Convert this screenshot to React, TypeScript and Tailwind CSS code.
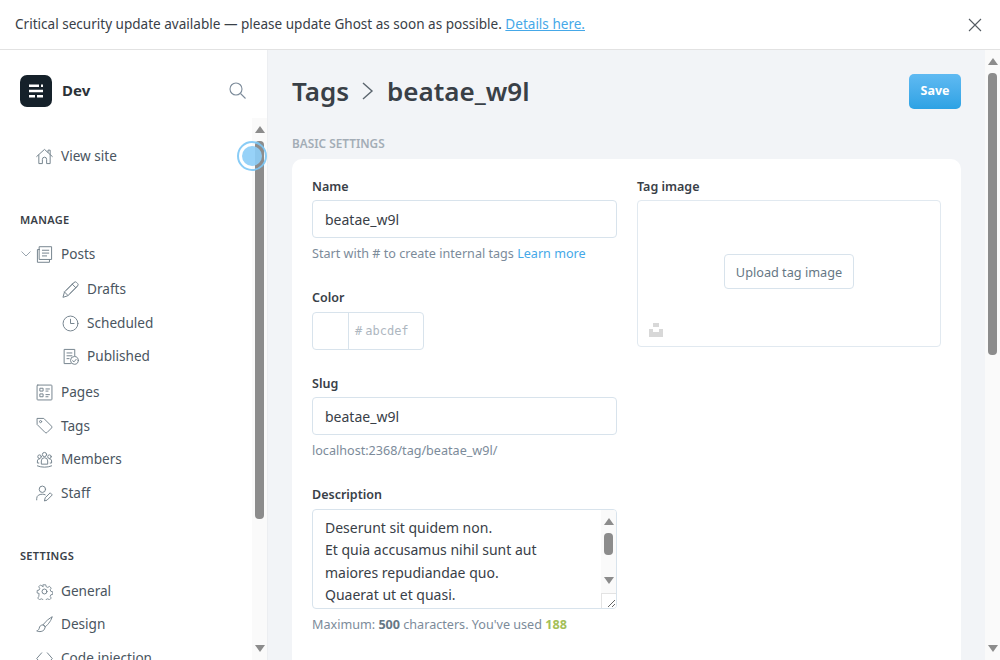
import React from "react";

const Ico = ({ children, size = 17 }: { children: React.ReactNode; size?: number }) => (
  <svg width={size} height={size} viewBox="0 0 24 24" fill="none" stroke="#76858f" strokeWidth={1.4} strokeLinecap="round" strokeLinejoin="round" className="shrink-0">
    {children}
  </svg>
);

const icons: Record<string, React.ReactNode> = {
  home: (<><path d="M1 12 12 2l11 10" /><path d="M4 10v12h5v-6a3 3 0 0 1 6 0v6h5V10" /><path d="M17 6V3h3v6" /></>),
  posts: (<><path d="M5 1h17v18H5z" /><path d="M5 5H2v18h17v-4" /><path d="M9 6h9M9 10h9M9 14h6" /></>),
  drafts: (<><path d="M1.500 22.500l2-7L17 2a2.500 2.500 0 0 1 3.500 0l1.500 1.500a2.500 2.500 0 0 1 0 3.500L8.500 20.500z" /><path d="M3.500 15.500l5 5M14.500 4.500l5 5M6 13 16.500 2.500M11 18 21.500 7.500" /></>),
  clock: (<><circle cx="12" cy="12" r="10.500" /><path d="M12 6v6h5" /></>),
  published: (<><path d="M12 22H3V2h15v9" /><path d="M7 7h7M7 11h7M7 15h3" /><circle cx="17.500" cy="17.500" r="5.500" /><path d="m15 18 2 1.500 3-3.500" /></>),
  pages: (<><rect x="1.500" y="1.500" width="21" height="21" rx="1" /><path d="M6 6h4v4H6zM6 14h4v4H6zM14 7h5M14 10h3M14 15h5M14 18h3" /></>),
  tags: (<><path d="M2 2h9l11 11a2 2 0 0 1 0 2.500L15.500 22a2 2 0 0 1-2.500 0L2 11z" /><circle cx="6.500" cy="6.500" r="1.500" /></>),
  members: (<><circle cx="12" cy="5" r="3" /><circle cx="5" cy="8" r="2.500" /><circle cx="19" cy="8" r="2.500" /><path d="M7.500 18v-4a4.500 4.500 0 0 1 9 0v4zM4 17H2v-3c0-2 1.500-3 3-3M20 17h2v-3c0-2-1.500-3-3-3M2 21c6 2.500 14 2.500 20 0" /></>),
  staff: (<><circle cx="9" cy="6" r="4.500" /><path d="M1 21v-2c0-4 3.500-6 8-6 1.500 0 3 .2 4 .8" /><path d="m12 22 1-4 7-7 3 3-7 7z" /></>),
  general: (<><circle cx="12" cy="12" r="3.500" /><path d="M10 1.500h4l.6 3 2.600 1.100 2.600-1.700 2.800 2.800-1.700 2.600 1.100 2.600 3 .6v4l-3 .6-1.100 2.600 1.700 2.600-2.800 2.800-2.600-1.700-2.600 1.100-.6 3h-4l-.6-3-2.600-1.100-2.600 1.700-2.800-2.800 1.700-2.600L3.500 15l-3-.6v-4l3-.6 1.100-2.600-1.700-2.600 2.800-2.800 2.600 1.700L9.400 4.500z" transform="translate(1.200 1.200) scale(.9)" /></>),
  design: (<><path d="M22.500 1.500c-3 1-9 6-12.500 11l3 3c4.500-4 9.500-10.500 9.500-14z" /><path d="M10 12.500c-3.500 0-5 2-5.500 5-.2 1.500-1.500 3-3.500 3.500 3.500 2 9.500 1 11-2.500.6-1.500.5-2.500 1-3z" /></>),
  code: (<path d="M8 4 1 12l7 8M16 4l7 8-7 8" />),
};

const NavItem = ({ icon, label, sub, h = "h-[34px]" }: { icon: string; label: string; sub?: boolean; h?: string }) => (
  <div className={`flex items-center gap-[8px] ${h} ${sub ? "pl-[62px]" : "pl-[36px]"}`}>
    <Ico>{icons[icon]}</Ico>
    <span className="text-[13.600px] text-[#4a5560] leading-none">{label}</span>
  </div>
);

const SectionTitle = ({ children }: { children: React.ReactNode }) => (
  <div className="pl-[20px] text-[11px] leading-none font-semibold tracking-[0.3px] text-[#394047] uppercase">{children}</div>
);

const ArrowUp = () => <div className="w-0 h-0 border-x-[5px] border-x-transparent border-b-[7px] border-b-[#8c8c8c]" />;
const ArrowDown = () => <div className="w-0 h-0 border-x-[5px] border-x-transparent border-t-[7px] border-t-[#8c8c8c]" />;

const Label = ({ children }: { children: React.ReactNode }) => (
  <div className="text-[12.500px] leading-none font-semibold text-[#394047] h-[14px] pt-[2px] flex items-center">{children}</div>
);

const TextBox = ({ value }: { value: string }) => (
  <div className="h-[38px] w-[305px] rounded-[4px] border border-[#d8e3ec] bg-white flex items-center pl-[12px] text-[14px] text-[#394047]">{value}</div>
);

export default function App() {
  return (
    <div className="w-[1000px] h-[660px] overflow-hidden flex flex-col bg-white font-['Noto_Sans',sans-serif]">
      <div className="h-[50px] shrink-0 border-b border-[#e2e2e2] bg-white flex items-center justify-between pl-[15px] pr-[18px]">
        <div className="text-[13.550px] text-[#394047]">
          Critical security update available — please update Ghost as soon as possible.{" "}
          <span className="text-[#45a8e8] underline">Details here.</span>
        </div>
        <svg width="14" height="14" viewBox="0 0 14 14" stroke="#555c63" strokeWidth="1.100"><path d="M1 1l12 12M13 1 1 13" /></svg>
      </div>

      <div className="flex-1 flex min-h-0">
        <aside className="w-[268px] shrink-0 border-r border-[#eceef1] bg-white flex flex-col min-h-0">
          <div className="h-[68px] shrink-0 pt-[25px] pl-[20px] pr-[21px] flex items-start justify-between">
            <div className="flex items-center gap-[10px]">
              <div className="w-[32px] h-[32px] rounded-[7px] bg-[#15212a] flex items-center justify-center">
                <svg width="14" height="14" viewBox="0 0 14 14" fill="#fff"><path d="M0 .5h10v2.500H0zM12 .5h2v2.500h-2zM0 5.800h14v2.400H0zM0 11h6v2.400H0zM8 11h6v2.400H8z" /></svg>
              </div>
              <span className="text-[15px] font-bold text-[#2b3238] mb-[2px]">Dev</span>
            </div>
            <svg width="17" height="17" viewBox="0 0 17 17" fill="none" stroke="#7c8b9a" strokeWidth="1.100" className="mt-[7px]"><circle cx="7" cy="7" r="6" /><path d="m11.500 11.500 5 5" /></svg>
          </div>
          <div className="flex-1 min-h-0 flex relative">
            <nav className="flex-1 min-w-0 overflow-hidden">
              <div className="mt-[21px]">
                <NavItem icon="home" label="View site" />
              </div>
              <div className="mt-[41px]"><SectionTitle>Manage</SectionTitle></div>
              <div className="mt-[11px] relative">
                <NavItem icon="posts" label="Posts" h="h-[36px]" />
                <svg width="10" height="6" viewBox="0 0 10 6" fill="none" stroke="#9aa5af" className="absolute left-[21px] top-[15px]"><path d="m.5.5 4.500 4.500L9.500.5" /></svg>
              </div>
              <NavItem icon="drafts" label="Drafts" sub />
              <NavItem icon="clock" label="Scheduled" sub />
              <NavItem icon="published" label="Published" sub h="h-[32px]" />
              <div className="mt-[3px]"><NavItem icon="pages" label="Pages" /></div>
              <NavItem icon="tags" label="Tags" h="h-[33px]" />
              <NavItem icon="members" label="Members" />
              <NavItem icon="staff" label="Staff" />
              <div className="mt-[40px]"><SectionTitle>Settings</SectionTitle></div>
              <div className="mt-[13px]">
                <NavItem icon="general" label="General" />
                <NavItem icon="design" label="Design" h="h-[32px]" />
                <div className="mt-[1px]"><NavItem icon="code" label="Code injection" /></div>
              </div>
            </nav>
            <div className="w-[15px] shrink-0 bg-[#fafafa] flex flex-col items-center">
              <div className="pt-[8px] pb-[8px]"><ArrowUp /></div>
              <div className="w-[9px] h-[378px] rounded-[4px] bg-[#8c8c8c]" />
              <div className="mt-auto pb-[8px]"><ArrowDown /></div>
            </div>
            <div className="absolute left-[237px] top-[23px] w-[30px] h-[30px] rounded-full border-2 border-[#7cc6f5]/90 flex items-center justify-center">
              <div className="w-[20px] h-[20px] rounded-full bg-[#8ccdf7]/90" />
            </div>
          </div>
        </aside>

        <main className="flex-1 min-w-0 bg-[#f2f4f7] flex">
          <div className="flex-1 min-w-0 overflow-hidden pl-[24px] pr-[24px]">
            <div className="flex items-start justify-between pt-[24px]">
              <div className="flex items-center h-[33px] text-[26px] font-semibold text-[#394047] leading-none">
                <span>Tags</span>
                <svg width="12" height="18" viewBox="0 0 12 18" fill="none" stroke="#5b656e" strokeWidth="1.400" className="mx-[13px]"><path d="m1 1 9 8-9 8" /></svg>
                <span>beatae_w9l</span>
              </div>
              <button className="w-[52px] h-[35px] rounded-[5px] bg-gradient-to-b from-[#5fbaf2] to-[#2ca2e4] text-white text-[12.500px] font-bold">Save</button>
            </div>
            <div className="mt-[28px] h-[14px] flex items-center text-[11.800px] font-semibold text-[#a3adb6] uppercase">Basic settings</div>
            <div className="mt-[8px] h-[560px] rounded-[10px] bg-white p-[20px] flex gap-[20px]">
              <div className="w-[305px] shrink-0">
                <Label>Name</Label>
                <div className="mt-[7px]"><TextBox value="beatae_w9l" /></div>
                <div className="mt-[8px] h-[16px] flex items-center text-[12.600px] text-[#7c8b9a]">Start with # to create internal tags&nbsp;<span className="text-[#45a8e8]">Learn more</span></div>

                <div className="mt-[28px]"><Label>Color</Label></div>
                <div className="mt-[8px] w-[112px] h-[38px] rounded-[4px] border border-[#d8e3ec] flex">
                  <div className="w-[36px] border-r border-[#d8e3ec]" />
                  <div className="flex items-center pl-[6px] gap-[3px] text-[12px] font-medium font-['DejaVu_Sans_Mono',monospace] text-[#aeb7bf]"><span>#</span><span>abcdef</span></div>
                </div>

                <div className="mt-[26px]"><Label>Slug</Label></div>
                <div className="mt-[7px]"><TextBox value="beatae_w9l" /></div>
                <div className="mt-[8px] h-[16px] flex items-center text-[12.600px] text-[#7c8b9a]">localhost:2368/tag/beatae_w9l/</div>

                <div className="mt-[28px]"><Label>Description</Label></div>
                <div className="mt-[8px] h-[100px] rounded-[4px] border border-[#d8e3ec] flex overflow-hidden">
                  <div className="flex-1 pl-[12px] pt-[7px] text-[14px] leading-[22.400px] text-[#394047]">
                    Deserunt sit quidem non.<br />Et quia accusamus nihil sunt aut<br />maiores repudiandae quo.<br />Quaerat ut et quasi.
                  </div>
                  <div className="w-[15px] shrink-0 bg-[#fafafa] flex flex-col items-center">
                    <div className="pt-[8px] pb-[8px]"><ArrowUp /></div>
                    <div className="w-[9px] h-[22px] rounded-[4px] bg-[#8c8c8c]" />
                    <div className="mt-[22px]"><ArrowDown /></div>
                    <div className="mt-auto w-full h-[15px] bg-white border-l border-t border-[#e3e3e3] flex items-end justify-end">
                      <svg width="10" height="10" viewBox="0 0 10 10" stroke="#555" strokeWidth="0.900"><path d="M9 2 2 9M9 6 6 9" /></svg>
                    </div>
                  </div>
                </div>
                <div className="mt-[8px] h-[16px] flex items-center text-[12.600px] text-[#7c8b9a]">
                  Maximum:&nbsp;<b className="font-bold text-[#667785]">500</b>&nbsp;characters. You've used&nbsp;<b className="font-bold text-[#a4bf58]">188</b>
                </div>
              </div>
              <div className="w-[304px] shrink-0">
                <Label>Tag image</Label>
                <div className="mt-[7px] h-[147px] rounded-[4px] border border-[#e1e9f0] flex flex-col relative">
                  <div className="flex-1 flex items-center justify-center pb-[4px]">
                    <div className="w-[130px] h-[35px] rounded-[4px] border border-[#d8e3ec] pt-[2px] flex items-center justify-center text-[12.700px] text-[#667785]">Upload tag image</div>
                  </div>
                  <svg width="14" height="14" viewBox="0 0 14 14" fill="#d8d8d8" className="absolute left-[11px] bottom-[9px]"><path d="M4 0h6v4H4zM0 6h4v3h6V6h4v8H0z" /></svg>
                </div>
              </div>
            </div>
          </div>
          <div className="w-[15px] shrink-0 bg-[#fafafa] flex flex-col items-center">
            <div className="pt-[8px] pb-[8px]"><ArrowUp /></div>
            <div className="w-[9px] h-[282px] rounded-[4px] bg-[#8c8c8c]" />
            <div className="mt-auto pb-[8px]"><ArrowDown /></div>
          </div>
        </main>
      </div>
    </div>
  );
}
